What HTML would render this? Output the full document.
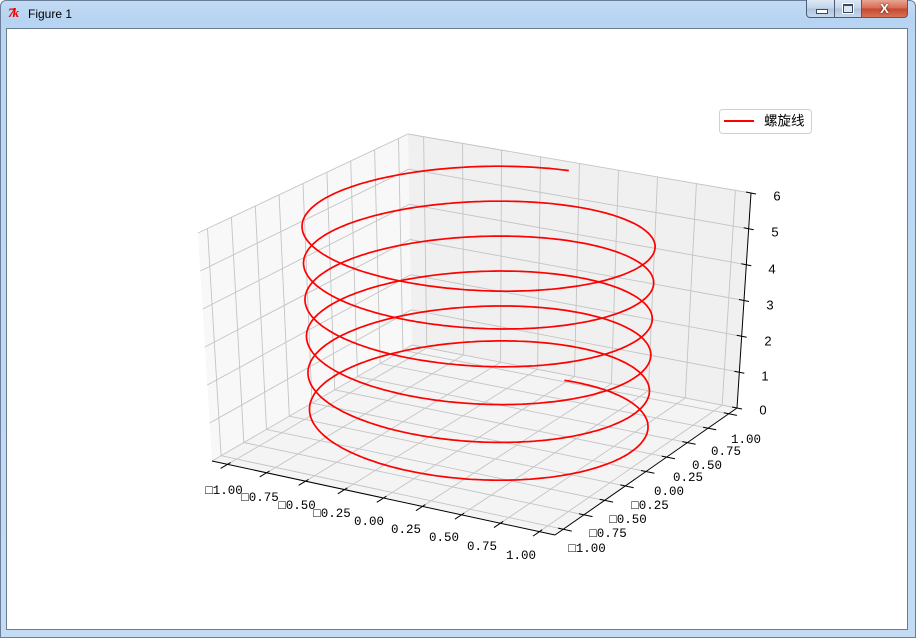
<!DOCTYPE html>
<html><head><meta charset="utf-8">
<style>
html,body{margin:0;padding:0;}
body{width:916px;height:638px;overflow:hidden;position:relative;background:#fff;font-family:"Liberation Sans",sans-serif;}
#win{position:absolute;left:0;top:0;width:914px;height:636px;border:1px solid #6a7f99;border-radius:6px 6px 0 0;
 background:linear-gradient(180deg,#c3dbf4 0px,#b6d3f2 20px,#bcd7f3 40px,#c4dcf3 100%);}
#client{position:absolute;left:6px;top:28px;width:900px;height:600px;border:1px solid #6d7d90;background:#fff;}
#title{position:absolute;left:28px;top:7px;font-size:12px;color:#000;}
#tk{position:absolute;left:8px;top:5px;font-size:13px;color:#e00;font-style:italic;font-weight:bold;font-family:"Liberation Serif",serif;letter-spacing:-2px;}
.btn{position:absolute;top:0;height:18px;border:1px solid #4b5d74;border-top:none;box-sizing:border-box;}
#bmin{left:806px;width:29px;border-radius:0 0 0 4px;background:linear-gradient(180deg,#dfe9f5,#c1d3e8 50%,#aec3dc 51%,#c7d8ec);}
#bmax{left:834px;width:28px;background:linear-gradient(180deg,#dfe9f5,#c1d3e8 50%,#aec3dc 51%,#c7d8ec);}
#bcls{left:861px;width:47px;border-radius:0 0 4px 0;background:linear-gradient(180deg,#e8a493,#d7694f 50%,#c6462e 51%,#d5735a);}
</style></head><body>
<div id="win"></div>
<div id="tk">7k</div>
<div id="title">Figure 1</div>
<div class="btn" id="bmin"><div style="position:absolute;left:9px;top:9px;width:10px;height:3px;background:#fff;border:1px solid #3a4a60;"></div></div>
<div class="btn" id="bmax"><div style="position:absolute;left:8px;top:4px;width:8px;height:6px;border:1px solid #3a4a60;border-top-width:2px;background:#dde8f4;box-shadow:0 0 0 1px #fff;"></div></div>
<div class="btn" id="bcls"><div style="position:absolute;left:0;width:45px;top:0;text-align:center;font:bold 13px 'Liberation Sans',sans-serif;color:#fff;line-height:17px;text-shadow:0 0 2px #4a1a10;">X</div></div>
<div id="client"></div>
<svg id="s" width="916" height="638" style="position:absolute;left:0;top:0" xmlns="http://www.w3.org/2000/svg">
<g id="g"></g>
<g font-family="'Liberation Mono','DejaVu Sans Mono',monospace" font-size="12.5" fill="#000" text-anchor="middle" dominant-baseline="central">
<text x="224" y="491">□1.00</text><text x="260" y="498">□0.75</text><text x="297" y="506">□0.50</text><text x="332" y="514">□0.25</text>
<text x="369" y="522">0.00</text><text x="406" y="530">0.25</text><text x="444" y="538">0.50</text><text x="482" y="547">0.75</text><text x="521" y="556">1.00</text>
<text x="587" y="549">□1.00</text><text x="608" y="534">□0.75</text><text x="628" y="520">□0.50</text><text x="650" y="506">□0.25</text>
<text x="669" y="492">0.00</text><text x="688" y="478">0.25</text><text x="707" y="466">0.50</text><text x="726" y="452">0.75</text><text x="746" y="440">1.00</text>
</g>
<g font-family="'Liberation Sans',sans-serif" font-size="13" fill="#000" text-anchor="middle" dominant-baseline="central">
<text x="763" y="410">0</text><text x="765" y="376">1</text><text x="768" y="341">2</text><text x="770" y="305">3</text><text x="772" y="269">4</text><text x="775" y="232">5</text><text x="777" y="196">6</text>
</g>
<rect x="719.5" y="109.5" width="92" height="24" rx="3" fill="#fff" fill-opacity="0.85" stroke="#d0d0d0"/>
<line x1="724" y1="121" x2="754" y2="121" stroke="#f00" stroke-width="2"/>
<text x="764" y="121" font-family="'Liberation Sans','Noto Sans CJK SC',sans-serif" font-size="13.5" dominant-baseline="central">螺旋线</text>
</svg>
<script>
(function(){
var C={"000":[212,461],"100":[555,535],"110":[737,408],"010":[412,345],
"001":[198,233],"101":[557,298],"111":[751,193],"011":[408,134]};
function L(a,b,t){return [a[0]+(b[0]-a[0])*t,a[1]+(b[1]-a[1])*t];}
function P(u,v,w){
 var a=L(C["000"],C["100"],u),b=L(C["010"],C["110"],u),c=L(C["001"],C["101"],u),d=L(C["011"],C["111"],u);
 return L(L(a,b,v),L(c,d,v),w);}
function U(x){return (x+1.1)/2.2;}
var out=[];
function poly(pts,f){out.push('<polygon points="'+pts.map(function(p){return p[0].toFixed(1)+','+p[1].toFixed(1)}).join(' ')+'" fill="'+f+'"/>');}
function ln(a,b,col,w){out.push('<line x1="'+a[0].toFixed(1)+'" y1="'+a[1].toFixed(1)+'" x2="'+b[0].toFixed(1)+'" y2="'+b[1].toFixed(1)+'" stroke="'+col+'" stroke-width="'+w+'"/>');}
poly([P(0,0,0),P(0,1,0),P(0,1,1),P(0,0,1)],"#f8f8f8");
poly([P(0,1,0),P(1,1,0),P(1,1,1),P(0,1,1)],"#f0f0f0");
poly([P(0,0,0),P(1,0,0),P(1,1,0),P(0,1,0)],"#f4f4f4");
var g="#c4c4c4",gw=0.9,i,t;
for(i=0;i<9;i++){t=U(-1+i*0.25);
 ln(P(0,t,0),P(0,t,1),g,gw);
 ln(P(t,1,0),P(t,1,1),g,gw);
 ln(P(t,0,0),P(t,1,0),g,gw);
 ln(P(0,t,0),P(1,t,0),g,gw);}
for(i=0;i<=6;i++){t=i/6;
 ln(P(0,0,t),P(0,1,t),g,gw);
 ln(P(0,1,t),P(1,1,t),g,gw);}
ln(P(0,0,0),P(1,0,0),"#000",1);
ln(P(1,0,0),P(1,1,0),"#000",1);
ln(P(1,1,0),P(1,1,1),"#000",1);
for(i=0;i<9;i++){t=U(-1+i*0.25);
 ln(P(t,0.015,0),P(t,-0.035,0),"#000",1);
 ln(P(0.985,t,0),P(1.025,t,0),"#000",1);}
for(i=0;i<=6;i++){t=i/6;
 var p=P(1,1,t);ln([p[0]-5,p[1]-1],[p[0]+5,p[1]+1],"#000",1);}
var d="",k=0.965;
for(i=0;i<=1500;i++){var tt=i/1500*12*Math.PI;var x=k*Math.sin(tt),y=k*Math.cos(tt)+0.03,z=tt/(2*Math.PI);
 var q=P(U(x),U(y),0.98*z/6);q[0]-=1;q[1]-=2;d+=(i?"L":"M")+q[0].toFixed(1)+" "+q[1].toFixed(1);}
out.push('<path d="'+d+'" fill="none" stroke="#f00" stroke-width="1.7"/>');
document.getElementById("g").innerHTML=out.join("");
})();
</script>
</body></html>
